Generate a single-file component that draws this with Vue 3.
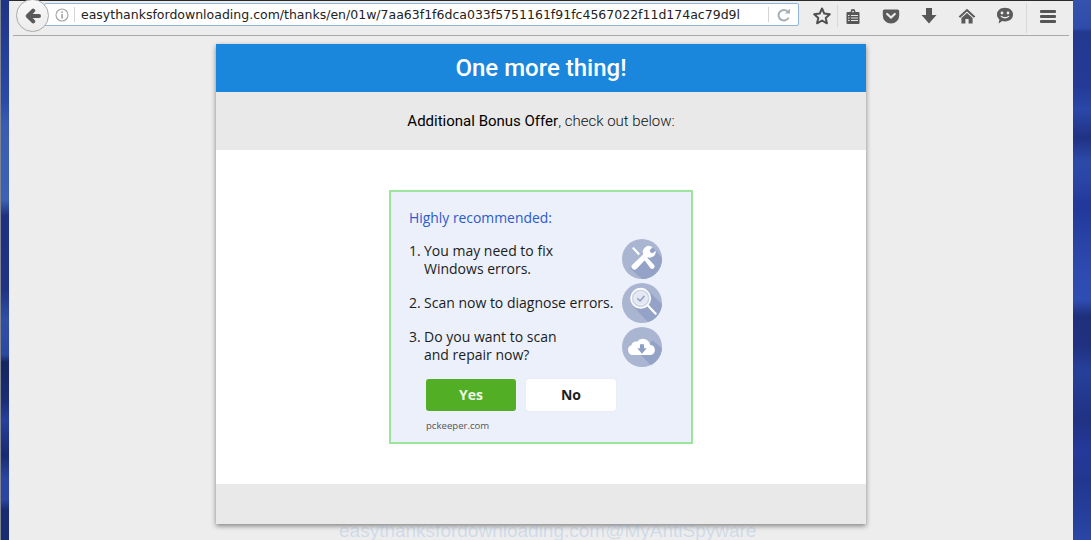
<script setup>
const shade = 'M12 44 L44 10 L60 28 L60 60 L30 60 Z'
</script>

<template>
  <div class="desktop">
    <div class="strip-left"></div>
    <div class="window">
      <header class="toolbar">
        <div class="urlbar">
          <svg class="info" width="14" height="14" viewBox="0 0 14 14"><circle cx="7" cy="7" r="6" fill="none" stroke="#a3a3a3" stroke-width="1.1"/><rect x="6.3" y="6" width="1.5" height="4.6" fill="#9a9a9a"/><rect x="6.3" y="3.4" width="1.5" height="1.6" fill="#9a9a9a"/></svg>
          <span class="sep"></span>
          <span class="url">easythanksfordownloading.com/thanks/en/01w/7aa63f1f6dca033f5751161f91fc4567022f11d174ac79d9l</span>
          <span class="sep reload-sep"></span>
          <svg class="reload" width="16" height="16" viewBox="0 0 16 16"><path d="M12.6 10.6 A5.3 5.3 0 1 1 11.6 4.4" fill="none" stroke="#a6aeb6" stroke-width="2"/><path d="M9 6.6 H14 V1.8 Z" fill="#a6aeb6"/></svg>
        </div>
        <button class="back" aria-label="Back">
          <svg width="16" height="16" viewBox="0 0 16 16"><path d="M14 8 H4 M8.2 2.6 L2.8 8 L8.2 13.4" fill="none" stroke="#5a5a5a" stroke-width="4" stroke-linecap="round" stroke-linejoin="round"/></svg>
        </button>
        <div class="tool star"><svg width="20" height="20" viewBox="0 0 20 20"><path d="M10 2.5 L12.3 7.6 L17.8 8.2 L13.7 11.9 L14.9 17.3 L10 14.5 L5.1 17.3 L6.3 11.9 L2.2 8.2 L7.7 7.6 Z" fill="none" stroke="#4f4f4f" stroke-width="2" stroke-linejoin="round"/></svg></div>
        <span class="divider"></span>
        <div class="tool reader"><svg width="14" height="15" viewBox="0 0 14 15"><path d="M1.5 3 H4.6 V2.4 A2.4 2.4 0 0 1 9.4 2.4 V3 H12.5 A1 1 0 0 1 13.5 4 V14 A1 1 0 0 1 12.5 15 H1.5 A1 1 0 0 1 .5 14 V4 A1 1 0 0 1 1.5 3 Z" fill="#565656"/><path d="M5 6.5 H12 M5 9 H12 M5 11.5 H12 M2 6.5 H3.6 M2 9 H3.6 M2 11.5 H3.6" stroke="#e6e6e6" stroke-width="1.1"/><circle cx="7" cy="2.6" r=".9" fill="#e6e6e6"/></svg></div>
        <div class="tool"><svg width="18" height="15" viewBox="0 0 18 15"><path d="M2.5 .5 H15.5 A1.7 1.7 0 0 1 17.2 2.2 V6.4 A8.2 8.2 0 0 1 .8 6.4 V2.2 A1.7 1.7 0 0 1 2.5 .5 Z" fill="#5b5b5b"/><path d="M5.2 5 L9 8.6 L12.8 5" fill="none" stroke="#ededed" stroke-width="2.2" stroke-linecap="round"/></svg></div>
        <div class="tool"><svg width="16" height="18" viewBox="0 0 16 18"><path d="M5 1 H11 V8 H15.5 L8 16.5 L.5 8 H5 Z" fill="#575757"/></svg></div>
        <div class="tool"><svg width="18" height="16" viewBox="0 0 18 16"><path d="M9 .8 L17.4 8.6 L15.8 9.8 L9 3.6 L2.2 9.8 L.6 8.6 Z" fill="#5b5b5b"/><path d="M9 5 L14.6 10 V15.5 H10.6 V11 H7.4 V15.5 H3.4 V10 Z" fill="#5b5b5b"/></svg></div>
        <div class="tool"><svg width="18" height="18" viewBox="0 0 18 18"><path d="M9 .8 C13.8 .8 17 3.6 17 7.6 C17 11.6 13.8 14.4 9 14.4 C8 14.4 7 14.3 6.2 14 L2.6 16.6 L3.4 12.5 C1.8 11.2 1 9.6 1 7.6 C1 3.6 4.2 .8 9 .8 Z" fill="#5b5b5b"/><circle cx="6" cy="6" r="1.4" fill="#ededed"/><circle cx="12" cy="6" r="1.4" fill="#ededed"/><path d="M5 9 C6.5 11.4 11.5 11.4 13 9" fill="none" stroke="#ededed" stroke-width="1.4"/></svg></div>
        <span class="divider tall"></span>
        <div class="tool menu"><span></span><span></span><span></span></div>
      </header>
      <div class="rule"></div>
      <main class="page">
        <section class="card">
          <h1 class="card-head">One more thing!</h1>
          <p class="card-sub"><strong>Additional Bonus Offer</strong>, check out below:</p>
          <div class="card-body">
            <div class="ad">
              <h2 class="ad-title">Highly recommended:</h2>
              <div class="ad-row">
                <p class="ad-text first"><span class="num">1.</span><span>You may need to fix<br>Windows errors.</span></p>
                <svg class="ad-icon" width="40" height="40" viewBox="0 0 60 60">
                  <defs><clipPath id="c1"><circle cx="30" cy="30" r="30"/></clipPath></defs>
                  <g clip-path="url(#c1)"><rect width="60" height="60" fill="#aab6d1"/><path :d="shade" fill="#93a2c6"/></g>
                  <path d="M15 14 L17.5 12 L27 22 L24.5 24.5 Z" fill="#fff"/>
                  <path d="M31 28 L34.5 24.5 L48 38.5 A3.6 3.6 0 0 1 42.5 43.5 Z" fill="#fff"/>
                  <path d="M46 12.5 L41.5 17 L42.8 20.2 L46 21.5 L50.5 17.5 A9 9 0 0 1 38.5 27.5 L22 44.5 A4 4 0 0 1 15.5 38.5 L32 23 A9 9 0 0 1 46 12.5 Z" fill="#fff"/>
                </svg>
              </div>
              <div class="ad-row">
                <p class="ad-text"><span class="num">2.</span><span>Scan now to diagnose errors.</span></p>
                <svg class="ad-icon" width="40" height="40" viewBox="0 0 60 60">
                  <defs><clipPath id="c2"><circle cx="30" cy="30" r="30"/></clipPath></defs>
                  <g clip-path="url(#c2)"><rect width="60" height="60" fill="#aab6d1"/><path d="M16 34 L38 10 L60 32 L60 60 L40 60 Z" fill="#93a2c6"/></g>
                  <circle cx="28" cy="23" r="14.5" fill="#cdd5e6" stroke="#fff" stroke-width="2.4"/>
                  <circle cx="28" cy="23" r="10" fill="#e2e7f2" stroke="#fff" stroke-width=".8"/>
                  <path d="M23 23 L27 27 L33.5 19.5" fill="none" stroke="#8f9ec4" stroke-width="2.2"/>
                  <path d="M39.5 34.5 L50.5 46" stroke="#fff" stroke-width="3.4" stroke-linecap="round"/>
                </svg>
              </div>
              <div class="ad-row">
                <p class="ad-text last"><span class="num">3.</span><span>Do you want to scan<br>and repair now?</span></p>
                <svg class="ad-icon" width="40" height="40" viewBox="0 0 60 60">
                  <defs><clipPath id="c3"><circle cx="30" cy="30" r="30"/></clipPath></defs>
                  <g clip-path="url(#c3)"><rect width="60" height="60" fill="#aab6d1"/><path d="M28 42 L46 20 L60 32 L60 60 L46 60 Z" fill="#93a2c6"/></g>
                  <path d="M16 42 A7.5 7.5 0 0 1 14 27.5 A7 7 0 0 1 22.5 22 A11 11 0 0 1 42 26.5 A8 8 0 0 1 44 42 Z" fill="#fff"/>
                  <path d="M27 26 H33 V32 H37 L30 40 L23 32 H27 Z" fill="#8f9ec4"/>
                </svg>
              </div>
              <div class="ad-buttons">
                <button class="btn yes">Yes</button>
                <button class="btn no">No</button>
              </div>
              <div class="ad-source">pckeeper.com</div>
            </div>
          </div>
          <div class="card-foot"></div>
        </section>
        <div class="watermark">easythanksfordownloading.com@MyAntiSpyware</div>
      </main>
    </div>
    <div class="strip-right"></div>
  </div>
</template>

<style>
html, body { margin: 0; overflow: hidden; }
</style>

<style scoped>
.desktop {
  width: 1091px;
  height: 540px;
  display: flex;
  overflow: hidden;
  background: #24399a;
}
.strip-left {
  width: 9px;
  flex: none;
  box-sizing: border-box;
  border-left: 1px solid #7d8390;
  background: linear-gradient(180deg, #1e3485 0, #2a4aa6 100px, #3a5cb0 125px, #3c62b2 200px, #1e3080 216px, #1f3384 290px, #3050a4 320px, #2a48a0 355px, #152560 362px, #1a2c74 400px, #26409c 420px, #182a70 455px, #2a44a0 478px, #2a44a0 500px, #1a2c70 510px, #1a2c70 540px);
}
.strip-right {
  flex: 1;
  background: linear-gradient(180deg, #3552ad 0, #2f4cab 28px, #23388f 32px, #243a96 85px, #2b47a8 110px, #1f3284 138px, #2c49a8 160px, #2a45a6 180px, #22389a 205px, #2e4ab0 270px, #2f4db2 300px, #1e2f7c 316px, #1f3180 345px, #26409a 370px, #1f3284 420px, #24399a 450px, #21378f 480px, #2a45a5 540px);
}
.window {
  width: 1064px;
  flex: none;
  background: #ededed;
  box-shadow: inset 1px 0 0 #e6e9f5;
  display: flex;
  flex-direction: column;
  position: relative;
}
.toolbar {
  height: 35px;
  box-sizing: border-box;
  border-top: 1px solid #2a2a2a;
  padding: 2px 0 0 35px;
  display: flex;
  align-items: flex-start;
  position: relative;
  font-family: "DejaVu Sans", sans-serif;
}
.urlbar {
  width: 755px;
  height: 23px;
  box-sizing: border-box;
  border: 1px solid #8fb4d8;
  border-radius: 2px;
  background: #fff;
  display: flex;
  align-items: center;
  padding-left: 10px;
  flex: none;
  overflow: hidden;
}
.info { flex: none; }
.sep {
  width: 1px;
  height: 15px;
  background: #d4d4d4;
  flex: none;
  margin: 0 6px 0 5px;
}
.url {
  font-size: 12.5px;
  color: #222;
  white-space: nowrap;
  width: 687px;
  overflow: hidden;
  flex: none;
}
.reload-sep { margin: 0; }
.reload { flex: none; margin-left: 7px; }
.back {
  position: absolute;
  left: 7px;
  top: -2px;
  width: 33px;
  height: 33px;
  border-radius: 50%;
  border: 1px solid #a9a9a9;
  background: linear-gradient(#f8f8f8, #ececec);
  display: flex;
  align-items: center;
  justify-content: center;
  padding: 0;
}
.tool {
  width: 38px;
  height: 26px;
  flex: none;
  display: flex;
  align-items: center;
  justify-content: center;
}
.star { width: 30px; margin-left: 8px; }
.reader { width: 30px; margin-right: 4px; }
.divider {
  width: 1px;
  height: 22px;
  background: #d8d8d8;
  flex: none;
  margin-top: 2px;
}
.divider.tall { height: 30px; margin-top: 0; margin-left: 2px; }
.menu {
  width: 42px;
  flex-direction: column;
  gap: 2px;
  padding-bottom: 1px;
}
.menu span {
  width: 16px;
  height: 3px;
  background: #555;
  border-radius: 1px;
}
.rule {
  height: 1px;
  background: #a9a9a9;
  margin: 0 4px;
  flex: none;
}
.page {
  flex: 1;
  display: flex;
  justify-content: center;
  padding-top: 8px;
  position: relative;
}
.card {
  width: 650px;
  height: 480px;
  display: flex;
  flex-direction: column;
  box-shadow: 0 2px 5px rgba(0, 0, 0, .45);
  font-family: Roboto, sans-serif;
}
.card-head {
  margin: 0;
  height: 48px;
  line-height: 48px;
  background: #1a86dc;
  color: #fff;
  text-align: center;
  font-size: 24px;
  font-weight: 500;
}
.card-sub {
  margin: 0;
  height: 58px;
  line-height: 58px;
  background: #e9e9e9;
  color: #111;
  text-align: center;
  font-size: 15px;
  font-weight: 300;
}
.card-sub strong { font-weight: 400; color: #000; }
.card-body {
  flex: 1;
  background: #fff;
  display: flex;
  justify-content: center;
  padding-top: 40px;
}
.card-foot {
  height: 40px;
  background: #e9e9e9;
}
.ad {
  width: 304px;
  height: 254px;
  box-sizing: border-box;
  border: 2px solid #9ce59c;
  background: #ebf0fa;
  padding: 14px 0 0 18px;
  font-family: "Open Sans", sans-serif;
  color: #1c1c1c;
}
.ad-title {
  margin: 0 0 7px;
  font-size: 13.9px;
  line-height: 24px;
  font-weight: 400;
  color: #2c5bcf;
}
.ad-row {
  height: 44px;
  display: flex;
  align-items: center;
}
.ad-text {
  margin: 0;
  width: 213px;
  font-size: 14px;
  line-height: 18px;
  display: flex;
  white-space: nowrap;
}
.ad-text.first { padding-top: 2px; }
.ad-text.last { padding-bottom: 2px; }
.num { width: 15px; flex: none; }
.ad-icon { flex: none; }
.ad-buttons {
  display: flex;
  gap: 10px;
  margin: 10px 0 0 17px;
}
.btn {
  width: 90px;
  height: 32px;
  border: 0;
  border-radius: 3px;
  padding: 0 0 2px;
  font-family: "Open Sans", sans-serif;
  font-size: 14px;
  font-weight: 700;
}
.yes { background: #52ae24; color: #eef7e6; }
.no { background: #fff; color: #1e1e1e; box-shadow: 0 0 1px #c9d1e4; }
.ad-source {
  margin: 7px 0 0 17px;
  font-size: 9.6px;
  line-height: 16px;
  color: #555;
}
.watermark {
  position: absolute;
  left: 330px;
  top: 483px;
  font-family: "Liberation Sans", sans-serif;
  font-size: 19px;
  line-height: 24px;
  white-space: nowrap;
  color: rgba(130, 170, 225, .28);
}
</style>
